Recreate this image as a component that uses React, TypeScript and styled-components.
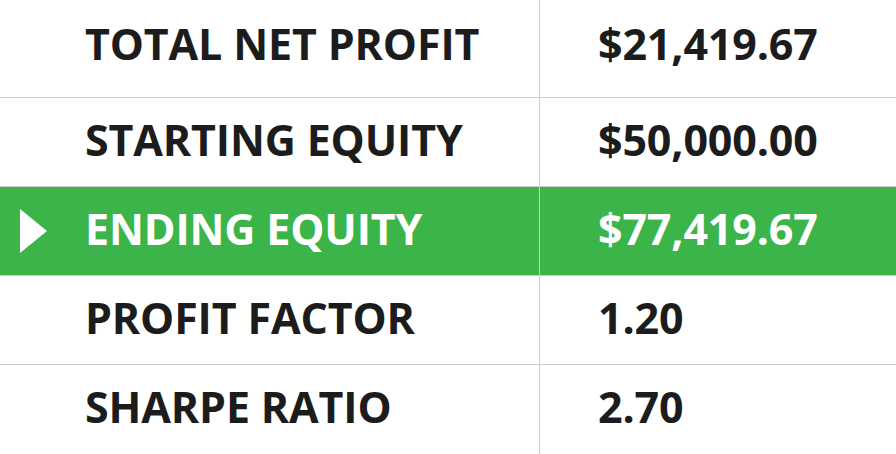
import styled, { createGlobalStyle } from "styled-components";

const GlobalStyle = createGlobalStyle`
  *, *::before, *::after {
    box-sizing: border-box;
  }
  html, body {
    margin: 0;
    padding: 0;
    background: #fff;
  }
  body {
    font-family: "Open Sans", "Noto Sans", sans-serif;
  }
`;

const Table = styled.div`
  width: 896px;
  height: 454px;
  overflow: hidden;
  display: flex;
  flex-direction: column;
`;

const Row = styled.div<{ $active?: boolean; $first?: boolean }>`
  display: grid;
  grid-template-columns: 540px 1fr;
  height: ${(p) => (p.$first ? "98px" : "89px")};
  border-bottom: 1px solid #cccccc;
  background-color: ${(p) => (p.$active ? "#3bb44a" : "#fff")};
  color: ${(p) => (p.$active ? "#fff" : "#1c1c1c")};
  flex-shrink: 0;
  &:last-child {
    border-bottom: none;
  }
  & > div {
    padding-bottom: ${(p) => (p.$first ? "11px" : "6px")};
  }
`;

const Cell = styled.div<{ $left?: boolean }>`
  position: relative;
  display: flex;
  align-items: center;
  padding-left: ${(p) => (p.$left ? "85px" : "58px")};
  border-right: ${(p) => (p.$left ? "1px solid #cccccc" : "none")};
  font-size: 43px;
  font-weight: 700;
  letter-spacing: -0.15px;
  white-space: nowrap;
`;

const Arrow = styled.span`
  position: absolute;
  left: 20px;
  top: 50%;
  transform: translateY(-50%);
  width: 0;
  height: 0;
  border-top: 22px solid transparent;
  border-bottom: 22px solid transparent;
  border-left: 27px solid #fff;
`;

interface Stat {
  label: string;
  value: string;
  active?: boolean;
}

const stats: Stat[] = [
  { label: "TOTAL NET PROFIT", value: "$21,419.67" },
  { label: "STARTING EQUITY", value: "$50,000.00" },
  { label: "ENDING EQUITY", value: "$77,419.67", active: true },
  { label: "PROFIT FACTOR", value: "1.20" },
  { label: "SHARPE RATIO", value: "2.70" },
];

const App = (): JSX.Element => {
  return (
    <>
      <GlobalStyle />
      <Table>
        {stats.map((item, index) => (
          <Row key={index} $active={item.active} $first={index === 0}>
            <Cell $left>
              {item.active && <Arrow />}
              {item.label}
            </Cell>
            <Cell>{item.value}</Cell>
          </Row>
        ))}
      </Table>
    </>
  );
};

export default App;
